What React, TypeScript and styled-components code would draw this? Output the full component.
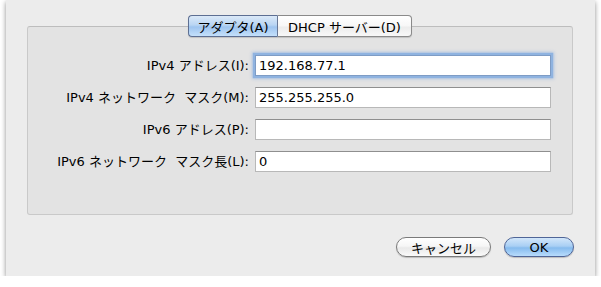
import React from 'react';
import styled, { createGlobalStyle } from 'styled-components';

const Global = createGlobalStyle`
  html, body { margin: 0; padding: 0; background: #ffffff; }
  body { font-family: "Lucida Grande", "DejaVu Sans", "Noto Sans CJK JP", sans-serif; color: #000; }
`;

const Sheet = styled.div`
  margin: 0 6px;
  width: 589px;
  height: 276px;
  box-sizing: border-box;
  background: #ececec;
  box-shadow: 0 2px 5px rgba(0, 0, 0, 0.45);
  padding: 15px 22px 0 21px;
  display: flex;
  flex-direction: column;
`;

const TabBar = styled.div`
  display: flex;
  justify-content: center;
  height: 22px;
  margin-bottom: -11px;
  position: relative;
  z-index: 1;
`;

const Tab = styled.div<{ $active?: boolean; $first?: boolean }>`
  box-sizing: border-box;
  height: 22px;
  display: flex;
  align-items: center;
  justify-content: center;
  white-space: nowrap;
  font-size: 13px;
  width: ${p => (p.$first ? '90px' : '134px')};
  border: 1px solid ${p => (p.$active ? '#5d6f93' : '#8a8a8a')};
  ${p => (p.$first ? 'border-radius: 4px 0 0 4px; border-right-color: #6a7a98;' : 'border-radius: 0 4px 4px 0; border-left: none;')}
  background: ${p =>
    p.$active
      ? 'linear-gradient(#dbe9f8 0%, #b9d5f3 45%, #9ec4ef 55%, #c4e0fb 100%)'
      : 'linear-gradient(#ffffff 0%, #f7f7f7 50%, #ececec 55%, #f8f8f8 100%)'};
  box-shadow: 0 1px 1px rgba(0, 0, 0, 0.15);
`;

const GroupBox = styled.div`
  box-sizing: border-box;
  height: 189px;
  border: 1px solid #c9c9c9;
  border-top-color: #bdbdbd;
  border-radius: 3px;
  background: #e3e3e3;
  padding: 28px 21px 0 0;
`;

const Form = styled.div`
  display: grid;
  grid-template-columns: 1fr 296px;
  column-gap: 6px;
  row-gap: 11px;
`;

const Label = styled.div`
  font-size: 13px;
  line-height: 21px;
  text-align: right;
  white-space: pre;
`;

const Field = styled.div<{ $focused?: boolean }>`
  box-sizing: border-box;
  height: 21px;
  background: #fff;
  border: 1px solid #b8b8b8;
  border-top-color: #8f8f8f;
  font-size: 13px;
  line-height: 19px;
  padding: 0 3px;
  ${p => (p.$focused ? 'box-shadow: 0 0 1px 2px #8fb3e0, 0 0 3px 3px rgba(110, 160, 225, 0.45); border-color: #7e9cc5;' : '')}
`;

const ButtonRow = styled.div`
  display: flex;
  justify-content: flex-end;
  gap: 13px;
  margin-top: 22px;
  margin-right: -1px;
`;

const Button = styled.div<{ $primary?: boolean; $w: number }>`
  box-sizing: border-box;
  width: ${p => p.$w}px;
  height: 20px;
  border-radius: 10px;
  display: flex;
  align-items: center;
  justify-content: center;
  font-size: 13px;
  border: 1px solid ${p => (p.$primary ? '#4f6597' : '#7a7a7a')};
  background: ${p =>
    p.$primary
      ? 'linear-gradient(#d2e6fa 0%, #a9cff4 45%, #86bbee 55%, #b8dcfc 100%)'
      : 'linear-gradient(#ffffff 0%, #f6f6f6 45%, #e9e9e9 55%, #fafafa 100%)'};
  box-shadow: 0 1px 1px rgba(0, 0, 0, 0.2);
`;

const rows: { label: string; value: string; focused?: boolean }[] = [
  { label: 'IPv4 アドレス(I):', value: '192.168.77.1', focused: true },
  { label: 'IPv4 ネットワーク  マスク(M):', value: '255.255.255.0' },
  { label: 'IPv6 アドレス(P):', value: '' },
  { label: 'IPv6 ネットワーク  マスク長(L):', value: '0' },
];

export default function App() {
  return (
    <>
      <Global />
      <Sheet>
        <TabBar>
          <Tab $active $first>アダプタ(A)</Tab>
          <Tab>DHCP サーバー(D)</Tab>
        </TabBar>
        <GroupBox>
          <Form>
            {rows.map(r => (
              <React.Fragment key={r.label}>
                <Label>{r.label}</Label>
                <Field $focused={r.focused}>{r.value}</Field>
              </React.Fragment>
            ))}
          </Form>
        </GroupBox>
        <ButtonRow>
          <Button $w={95}>キャンセル</Button>
          <Button $w={70} $primary>OK</Button>
        </ButtonRow>
      </Sheet>
    </>
  );
}
